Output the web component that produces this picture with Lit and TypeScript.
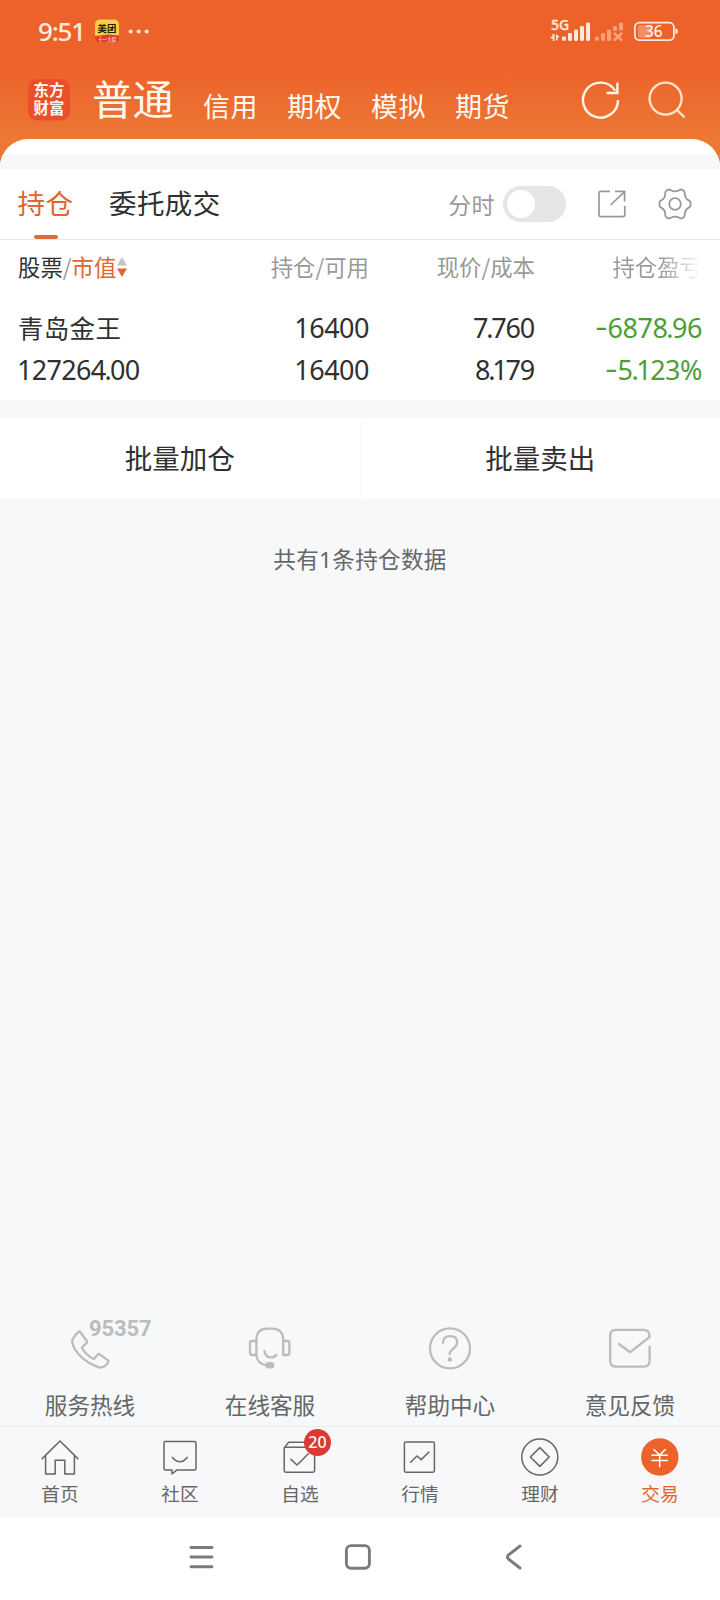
import { LitElement, html, css, svg } from "lit";
import { customElement } from "lit/decorators.js";

const services = [
  {
    label: "服务热线",
    icon: svg`<path d="M9.6 12.2 C11.4 9 13.6 6.4 16 4.4 Q16.6 4.2 17.2 5 L24 14.2 Q24.4 15 23.8 15.8 L18.8 20.6 C21 25.4 26.4 30.4 31 32 L34.8 27.4 Q35.6 26.6 36.6 27.2 L45 33.4 Q46 34.4 45.2 35.4 C43 38.6 40 41 36.4 40.4 C22 36 11.4 25 9.3 15.6 Q9 13.8 9.6 12.2 Z"/>`,
    tag: "95357",
  },
  {
    label: "在线客服",
    icon: svg`<path d="M13.4 28 V13 Q13.4 1.6 24.4 1.6 H29 Q40.2 1.6 40.2 13 V28 H44.2 Q46.4 28 46.4 26 V16 Q46.4 14 44.2 14 H40.4 M13.4 14 H9.2 Q7 14 7 16 V26 Q7 28 9.2 28 H13.4 Q14 37 24 38.4"/><path d="M21.4 24 Q22.6 30.4 27.6 30.4 Q31.6 30.4 33.4 28"/><rect x="23.6" y="36.2" width="6.6" height="4.2" rx="2.1" fill="#bcbcbc"/>`,
  },
  {
    label: "帮助中心",
    icon: svg`<circle cx="27" cy="21.4" r="20"/><path d="M20 15.8 Q20 9.2 27 9.2 Q34.2 9.2 34.2 15.4 Q34.2 18.4 30 21.8 Q26.6 24.4 26.6 27.2"/><circle cx="26.8" cy="32.4" r="1.1" fill="#bcbcbc"/>`,
  },
  {
    label: "意见反馈",
    icon: svg`<path d="M46.6 19.6 V33.8 Q46.6 39.6 40.8 39.6 H12.8 Q7.2 39.6 7.2 33.8 V8.6 Q7.2 2.8 12.8 2.8 H40.8 Q46.6 2.8 46.6 10 L27.2 25.2 L16 17"/>`,
  },
];

const tabs = [
  {
    label: "首页",
    icon: svg`<path d="M2.2 22.6 L20 5 L37.8 22.6 M5.6 19.4 V38 H15.2 V24.2 H24.8 V38 H34.4 V19.4"/>`,
  },
  {
    label: "社区",
    icon: svg`<path d="M5 5.5 H34.4 Q36 5.5 36 7 V32.4 Q36 33.9 34.4 33.9 H17 L12 37.8 V33.9 H5.6 Q4 33.9 4 32.4 V7 Q4 5.5 5 5.5 Z"/><path d="M12.4 21.4 Q20 30 27.2 21.4"/>`,
  },
  {
    label: "自选",
    icon: svg`<rect x="4.2" y="11.2" width="30.4" height="25" rx="1.6"/><path d="M4.4 11.6 L8.6 6.2 H30 L34.4 11.6 M11 23.4 L17 29 L28.4 17.8"/>`,
    badge: "20",
  },
  {
    label: "行情",
    icon: svg`<rect x="4.4" y="6" width="30" height="30.2" rx="1.4"/><path d="M10.6 26.2 L17 20 L21.2 23.6 L29 16"/>`,
  },
  {
    label: "理财",
    icon: svg`<circle cx="19.8" cy="21" r="18"/><path d="M19.8 11.6 L29.2 21 L19.8 30.4 L10.4 21 Z"/>`,
  },
  {
    label: "交易",
    active: true,
    icon: svg`<circle cx="19.8" cy="21" r="18.7" fill="#eb632b" stroke="none"/><g stroke="#fff"><path d="M14 13.6 L19.6 19 L25.2 13.6 M12 19.2 H27.4 M12 24.4 H27.4 M19.7 19 V30.8"/></g>`,
  },
];

/** Renders a figure with tightened dots and inner ones and a wider minus sign. */
const figure = (text: string) =>
  [...text].map((c, i) => {
    if (c === "-") return html`<span class="minus">-</span>`;
    if (c === ".") return html`<span class="dot">.</span>`;
    if (c === "1" && i > 0) return html`<span class="one">1</span>`;
    return c;
  });

@customElement("app-root")
export class AppRoot extends LitElement {
  static styles = css`
    :host {
      display: flex;
      flex-direction: column;
      height: 1600px;
      width: 720px;
      overflow: hidden;
      background: #f7f8fa;
      color: #303030;
      font-family: "Noto Sans CJK SC", sans-serif;
      font-size: 28px;
    }
    * { box-sizing: border-box; }
    svg { display: block; flex: none; overflow: visible; fill: none; }
    .hero {
      flex: none;
      height: 169px;
      background: linear-gradient(#ed622a 0, #ed622a 68px, #ec7834 139px, #ec7834 169px);
      color: #fff8f0;
    }
    .status { display: flex; align-items: center; height: 62px; padding: 0 42px 0 38px; }
    .clock {
      width: 57px;
      font: 500 26px/26px "Noto Sans", sans-serif;
      letter-spacing: -1.2px;
      color: #fdeadd;
    }
    .dots { margin-left: 8px; }
    .gap { flex: 1; }
    .bar { display: flex; height: 77px; padding: 0 34px 0 28px; }
    .logo { margin-top: 17px; }
    .titles { display: flex; margin-left: 22px; line-height: 42px; }
    .title { width: 111px; padding-top: 14px; font-size: 41px; letter-spacing: -0.4px; }
    .sub { width: 84px; padding-top: 23px; letter-spacing: 0.4px; font-size: 27px; }
    .actions { display: flex; margin-left: auto; gap: 26px; padding-top: 17px; }
    .sheet { height: 30px; border-radius: 28px 28px 0 0; background: #fff; padding-top: 16px; overflow: hidden; }
    .sheet i { display: block; height: 14px; background: #f7f8fa; }
    .panel { flex: none; height: 231px; background: #fff; }
    .tools {
      display: flex;
      height: 71px;
      padding: 0 28px 0 18px;
      border-bottom: 1px solid #e8e8e8;
      line-height: 67px;
      font-size: 27.5px;
      letter-spacing: 0.4px;
      white-space: nowrap;
    }
    .on { color: #e0662f; }
    .tool-tab { display: flex; flex-direction: column; align-items: center; width: 55px; margin-right: 36px; }
    .line { width: 24px; height: 4px; border-radius: 2px; background: #de6b3a; margin-top: -1px; }
    .tools .right { display: flex; align-items: center; margin-left: auto; height: 70px; color: #999; font-size: 23px; }
    .switch { width: 63px; height: 36px; margin: 0 32px 0 8px; padding: 4px; border-radius: 18px; background: #e5e5e7; }
    .knob { width: 28px; height: 28px; border-radius: 50%; background: #fff; }
    .gear { margin-left: 32px; }
    .row { display: grid; grid-template-columns: 190px 161px 166px 167px; padding-left: 18px; text-align: right; }
    .row > :first-child { text-align: left; }
    .head { height: 67px; line-height: 53px; font-size: 22.4px; color: #999; }
    .dark { color: #303030; }
    .sort { display: inline-block; margin-left: 0.6px; vertical-align: -1px; }
    .fade { color: transparent; background: linear-gradient(90deg, #999 55%, #fff 99%) text; white-space: nowrap; }
    .body { height: 42px; line-height: 42px; font-family: "Noto Sans", sans-serif; font-size: 27px; letter-spacing: -0.5px; }
    .stock { font-family: "Noto Sans CJK SC", sans-serif; font-size: 25.5px; letter-spacing: 0.3px; line-height: 39px; }
    .value { letter-spacing: -0.7px; margin-left: -1px; }
    .price { letter-spacing: -1.2px; padding-right: 1px; }
    .dot { margin: 0 -1px; }
    .one { margin: 0 -1px; }
    .minus { display: inline-block; transform: translateY(-2px) scaleX(1.4); margin: 0 2px; }
    .neg { color: #4c9e39; }
    .batch { flex: none; display: flex; height: 81px; margin-top: 18px; background: #fff; text-align: center; line-height: 79px; font-size: 27.5px; }
    .batch > div { flex: 1; }
    .batch > div + div { border-left: 1px solid #fafafa; }
    .count { margin-top: 41px; text-align: center; line-height: 38px; font-size: 22.6px; color: #666; letter-spacing: 0.3px; }
    .num { font-family: "Noto Sans", sans-serif; }
    .services { display: grid; grid-template-columns: repeat(4, 1fr); height: 100px; color: #666; }
    .service { position: relative; display: flex; flex-direction: column; align-items: center; font-size: 22.6px; line-height: 32px; }
    .service svg { stroke: #bcbcbc; stroke-width: 2.3; stroke-linecap: round; stroke-linejoin: round; margin: 1px 0 18px; }
    .tag { position: absolute; left: 89px; top: -8px; font: 700 22px/22px Roboto, sans-serif; color: #bcbcbc; letter-spacing: -0.1px; }
    .tabs { flex: none; display: grid; grid-template-columns: repeat(6, 1fr); height: 91px; border-top: 1px solid #ececee; background: #f8f8fa; }
    .tab { position: relative; display: flex; flex-direction: column; align-items: center; padding-top: 9px; font-size: 18.7px; line-height: 26px; color: #666; }
    .tab svg { stroke: #666; stroke-width: 1.5; stroke-linejoin: round; stroke-linecap: round; margin-bottom: 2px; }
    .tab.on { color: #e0662f; }
    .badge { position: absolute; left: 64px; top: 2px; width: 27px; height: 27px; border-radius: 50%; background: #da3a32; color: #fff; font: 500 16px/27px "Noto Sans", sans-serif; text-align: center; }
    .nav { flex: none; height: 83px; background: #fff; display: flex; align-items: center; padding: 0 0 4px 189px; gap: 130px; }
    .nav svg { stroke: #7b7b7b; stroke-width: 2.9; stroke-linecap: round; stroke-linejoin: round; }
    .cjk { font-family: "Noto Sans CJK SC", sans-serif; }
    .mark { font-family: "Noto Sans CJK SC", sans-serif; font-weight: 700; }
    .latin { font-family: "Noto Sans", sans-serif; font-weight: 500; }
  `;

  render() {
    return html`
      <div class="hero">
        <div class="status">
          <span class="clock">9:51</span>
          <svg width="24" height="24" viewBox="0 0 24 24">
            <rect y="0.5" width="24" height="23" rx="5" fill="#f6cf45" />
            <path d="M0 17 L14 15.5 L24 16.5 V18.5 Q24 23.5 19 23.5 H5 Q0 23.5 0 18.5 Z" fill="#e23c2c" />
            <text class="cjk" x="2.6" y="12.8" font-size="9.4" font-weight="700" fill="#221a05">美团</text>
            <text class="cjk" x="3" y="22" font-size="4.6" fill="#fff">十一大促</text>
          </svg>
          <svg class="dots" width="24" height="6" viewBox="0 0 24 6">
            <g fill="#fdeadd"><circle cx="3.6" cy="3.6" r="2" /><circle cx="11.6" cy="3.6" r="2" /><circle cx="19.6" cy="3.6" r="2" /></g>
          </svg>
          <span class="gap"></span>
          <svg width="128" height="24" viewBox="550 19 128 24">
            <g fill="#fdeadd">
              <text class="latin" x="551" y="30.4" font-size="14" font-weight="700" stroke="#fdeadd" stroke-width="0.3">5G</text>
              <path d="M552.5 34 h2 v7 h-1.6 v-2 l-3 -1.6 l2.6 -1 Z M556 34 l3.6 3 l-2 .6 v3 h-1.6 Z" />
              <rect x="562" y="36.5" width="4" height="4.3" rx="1.4" /><rect x="568" y="33" width="4" height="8" rx="1.4" />
              <rect x="574" y="29.5" width="4" height="11.5" rx="1.4" /><rect x="580" y="26" width="4" height="15" rx="1.4" />
              <rect x="586" y="22.5" width="4" height="18.5" rx="1.4" />
            </g>
            <g fill="#f7a27c">
              <rect x="595" y="36.5" width="4" height="4.3" rx="1.4" /><rect x="601" y="33" width="4" height="8" rx="1.4" />
              <rect x="607" y="29.5" width="4" height="11.5" rx="1.4" /><rect x="613" y="26" width="4" height="5" rx="1.4" />
              <rect x="619" y="22.5" width="4" height="8" rx="1.4" />
            </g>
            <path d="M614.5 33.5 L621.5 40 M621.5 33.5 L614.5 40" stroke="#f7a27c" stroke-width="2.4" stroke-linecap="round" />
            <rect x="638" y="25" width="13" height="13" rx="2" fill="#f38e63" />
            <rect x="634.9" y="22.7" width="39" height="17.4" rx="4.6" stroke="#fdeadd" stroke-width="1.8" />
            <path d="M675.3 28.5 Q678 28.5 678 31.3 Q678 34 675.3 34 Z" fill="#fdeadd" />
            <text class="latin" x="645" y="37" font-size="15.4" fill="#fff3ea">36</text>
          </svg>
        </div>
        <div class="bar">
          <svg class="logo" width="42" height="42" viewBox="0 0 42 42">
            <rect width="42" height="41.5" rx="9" fill="#ea4f29" />
            <g class="mark" fill="#fff8f0" font-size="15.4"><text x="5.6" y="17.4">东方</text><text x="5.6" y="35.4">财富</text></g>
          </svg>
          <div class="titles">
            <span class="title">普通</span>
            ${["信用", "期权", "模拟", "期货"].map((t) => html`<span class="sub">${t}</span>`)}
          </div>
          <div class="actions">
            <svg width="40" height="42" viewBox="0 0 40 42" stroke="#fff5ea" stroke-width="2.4">
              <path d="M38 21 A17.5 17.5 0 1 1 35.2 11.6 M26.4 14 H37.4 V3.4" />
            </svg>
            <svg width="40" height="42" viewBox="0 0 40 42" stroke="#ffe3cd" stroke-width="2.4" stroke-linecap="round">
              <circle cx="19.6" cy="19.6" r="16" /><path d="M31 31 L37.8 37.6" />
            </svg>
          </div>
        </div>
        <div class="sheet"><i></i></div>
      </div>

      <div class="panel">
        <div class="tools">
          <div class="tool-tab on"><span>持仓</span><span class="line"></span></div>
          <span>委托成交</span>
          <div class="right">
            <span>分时</span>
            <div class="switch"><div class="knob"></div></div>
            <svg width="28" height="28" viewBox="0 0 28 28" stroke="#999" stroke-width="1.7">
              <path d="M12 1.4 H3 Q1 1.4 1 3 V25 Q1 26.6 3 26.6 H24.8 Q26.8 26.6 26.8 25 V16 M17 1.4 H26.6 V11.4 M26.4 1.8 L12.6 15" />
            </svg>
            <svg class="gear" width="34" height="32" viewBox="0 0 34 32" stroke="#999" stroke-width="1.8" stroke-linejoin="round">
              <path d="M10.4 1.6 Q11.6 1.2 12.8 2.3 Q17 4.6 21.2 2.3 Q22.4 1.2 23.6 1.6 L25.8 2.8 Q27 4 26.8 6 Q27 10.6 30.8 12.4 Q32.5 13.2 32.5 14.6 V17.4 Q32.5 18.8 30.8 19.6 Q27 21.4 26.8 26 Q27 28 25.8 29.2 L23.6 30.4 Q22.4 30.8 21.2 29.7 Q17 27.4 12.8 29.7 Q11.6 30.8 10.4 30.4 L8.2 29.2 Q7 28 7.2 26 Q7 21.4 3.2 19.6 Q1.5 18.8 1.5 17.4 V14.6 Q1.5 13.2 3.2 12.4 Q7 10.6 7.2 6 Q7 4 8.2 2.8 Z" />
              <circle cx="17" cy="16" r="5.8" />
            </svg>
          </div>
        </div>
        <div class="row head">
          <span><span class="dark">股票</span>/<span class="on">市值</span><svg class="sort" width="10" height="20" viewBox="0 0 10 20"><path d="M5 0 L10 8.4 H0 Z" fill="#c4c4c4" /><path d="M0 11.6 H10 L5 20 Z" fill="#e0662f" /></svg></span>
          <span>持仓/可用</span><span>现价/成本</span><span><span class="fade">持仓盈亏</span></span>
        </div>
        <div class="row body">
          <span class="stock">青岛金王</span><span>16400</span><span class="price">${figure("7.760")}</span><span class="neg">${figure("-6878.96")}</span>
        </div>
        <div class="row body">
          <span class="value">${figure("127264.00")}</span><span>16400</span><span class="price">${figure("8.179")}</span><span class="neg">${figure("-5.123%")}</span>
        </div>
      </div>

      <div class="batch"><div>批量加仓</div><div>批量卖出</div></div>
      <div class="count">共有<span class="num">1</span>条持仓数据</div>
      <span class="gap"></span>

      <div class="services">
        ${services.map((s) => html`
          <div class="service">
            <svg width="54" height="44" viewBox="0 0 54 44">${s.icon}</svg>
            ${s.tag ? html`<span class="tag">${s.tag}</span>` : ""}
            <span>${s.label}</span>
          </div>`)}
      </div>
      <div class="tabs">
        ${tabs.map((t) => html`
          <div class="tab ${t.active ? "on" : ""}">
            <svg width="40" height="42" viewBox="0 0 40 42">${t.icon}</svg>
            <span>${t.label}</span>
            ${t.badge ? html`<span class="badge">${t.badge}</span>` : ""}
          </div>`)}
      </div>
      <div class="nav">
        <svg width="26" height="26" viewBox="0 0 26 26"><path d="M2 3.5 H23 M2 13 H23 M2 22.7 H23" /></svg>
        <svg width="26" height="26" viewBox="0 0 26 26"><rect x="1.4" y="1.6" width="23" height="22.6" rx="4.6" /></svg>
        <svg width="26" height="26" viewBox="0 0 26 26"><path d="M19 2 L7.4 11 Q5.6 13 7.4 15 L19 24" /></svg>
      </div>
    `;
  }
}
